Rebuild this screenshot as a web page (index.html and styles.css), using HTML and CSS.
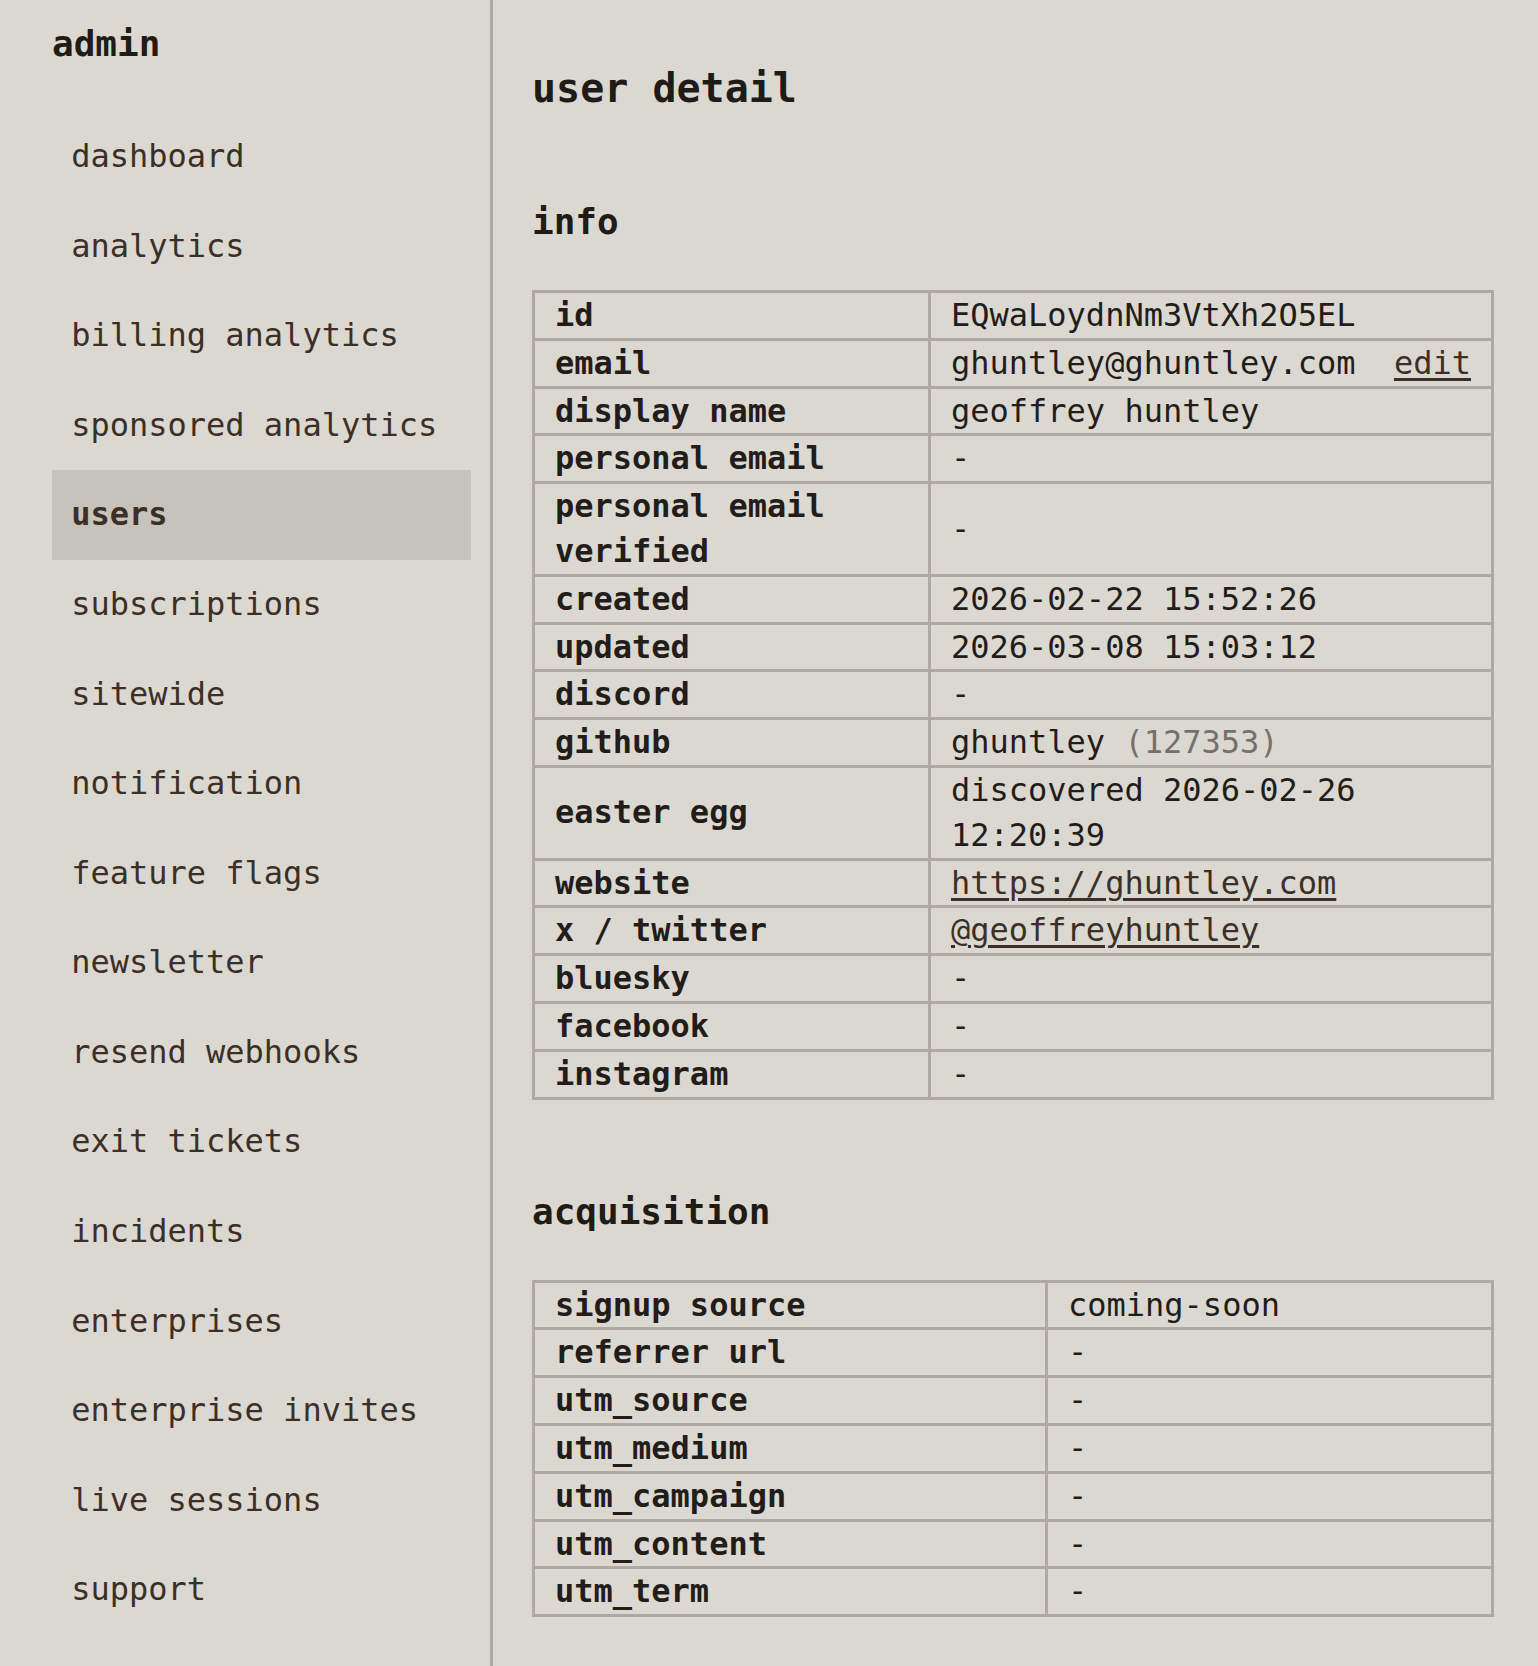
FILE: index.html
```html
<!DOCTYPE html>
<html lang="en">
<head>
<meta charset="utf-8">
<title>user detail</title>
<link rel="stylesheet" href="styles.css">
</head>
<body>
<div class="layout">
  <aside class="sidebar">
    <div class="brand">admin</div>
    <nav class="nav">
      <a class="nav-item" href="#">dashboard</a>
      <a class="nav-item" href="#">analytics</a>
      <a class="nav-item" href="#">billing analytics</a>
      <a class="nav-item" href="#">sponsored analytics</a>
      <a class="nav-item active" href="#">users</a>
      <a class="nav-item" href="#">subscriptions</a>
      <a class="nav-item" href="#">sitewide</a>
      <a class="nav-item" href="#">notification</a>
      <a class="nav-item" href="#">feature flags</a>
      <a class="nav-item" href="#">newsletter</a>
      <a class="nav-item" href="#">resend webhooks</a>
      <a class="nav-item" href="#">exit tickets</a>
      <a class="nav-item" href="#">incidents</a>
      <a class="nav-item" href="#">enterprises</a>
      <a class="nav-item" href="#">enterprise invites</a>
      <a class="nav-item" href="#">live sessions</a>
      <a class="nav-item" href="#">support</a>
      <a class="nav-item" href="#">moderation</a>
    </nav>
  </aside>
  <main class="main">
    <h1 class="page-title">user detail</h1>

    <section class="section">
      <h2 class="section-title">info</h2>
      <table class="kv kv-info">
        <colgroup><col class="col-key"><col></colgroup>
        <tbody>
          <tr><th>id</th><td>EQwaLoydnNm3VtXh2O5EL</td></tr>
          <tr><th>email</th><td><div class="split"><span>ghuntley@ghuntley.com</span><a class="link" href="#">edit</a></div></td></tr>
          <tr><th>display name</th><td>geoffrey huntley</td></tr>
          <tr><th>personal email</th><td>-</td></tr>
          <tr><th>personal email verified</th><td>-</td></tr>
          <tr><th>created</th><td>2026-02-22 15:52:26</td></tr>
          <tr><th>updated</th><td>2026-03-08 15:03:12</td></tr>
          <tr><th>discord</th><td>-</td></tr>
          <tr><th>github</th><td>ghuntley <span class="muted">(127353)</span></td></tr>
          <tr><th>easter egg</th><td>discovered 2026-02-26 12:20:39</td></tr>
          <tr><th>website</th><td><a class="link" href="#">https://ghuntley.com</a></td></tr>
          <tr><th>x / twitter</th><td><a class="link" href="#">@geoffreyhuntley</a></td></tr>
          <tr><th>bluesky</th><td>-</td></tr>
          <tr><th>facebook</th><td>-</td></tr>
          <tr><th>instagram</th><td>-</td></tr>
        </tbody>
      </table>
    </section>

    <section class="section">
      <h2 class="section-title">acquisition</h2>
      <table class="kv kv-acq">
        <colgroup><col class="col-key"><col></colgroup>
        <tbody>
          <tr><th>signup source</th><td>coming-soon</td></tr>
          <tr><th>referrer url</th><td>-</td></tr>
          <tr><th>utm_source</th><td>-</td></tr>
          <tr><th>utm_medium</th><td>-</td></tr>
          <tr><th>utm_campaign</th><td>-</td></tr>
          <tr><th>utm_content</th><td>-</td></tr>
          <tr><th>utm_term</th><td>-</td></tr>
        </tbody>
      </table>
    </section>
  </main>
</div>
</body>
</html>
```

FILE: styles.css
```css
* {
  box-sizing: border-box;
}

html, body {
  margin: 0;
  padding: 0;
  background: #dbd8d2;
}

body {
  font-family: "DejaVu Sans Mono", "Liberation Mono", monospace;
  font-size: 32px;
  color: #221d19;
}

.layout {
  display: flex;
  align-items: stretch;
  min-height: 100vh;
}

.sidebar {
  flex: 0 0 493px;
  width: 493px;
  padding: 22px 19px 40px 52px;
  border-right: 3px solid #aea9a3;
}

.brand {
  font-size: 36px;
  font-weight: 700;
  line-height: 44px;
  color: #1f1b17;
  margin-bottom: 46px;
}

.nav {
  display: flex;
  flex-direction: column;
}

.nav-item {
  display: block;
  padding: 19.2px;
  line-height: 1.6;
  color: #3b2f26;
  text-decoration: none;
}

.nav-item.active {
  background: #c6c2bc;
  font-weight: 700;
}

.main {
  flex: 1 1 auto;
  min-width: 0;
  padding: 64px 44px 40px 39px;
}

.page-title {
  margin: 0;
  font-size: 40px;
  line-height: 48px;
  font-weight: 700;
  color: #1f1b17;
}

.section {
  margin-top: 86px;
}

.section + .section {
  margin-top: 88px;
}

.section-title {
  margin: 0 0 44px 0;
  font-size: 36px;
  line-height: 48px;
  font-weight: 700;
  color: #1f1b17;
}

.kv {
  width: 100%;
  border-collapse: collapse;
  table-layout: fixed;
  border: 3px solid #aea9a3;
}

.kv-info .col-key {
  width: 396px;
}

.kv-acq .col-key {
  width: 513px;
}

.kv th,
.kv td {
  border: 3px solid #aea9a3;
  padding: 0 20px;
  line-height: 44.8px;
  text-align: left;
  vertical-align: middle;
  font-size: 32px;
}

.kv th {
  font-weight: 700;
  color: #221d19;
}

.kv td {
  font-weight: 400;
  color: #221d19;
}

.split {
  display: flex;
  justify-content: space-between;
  align-items: baseline;
}

.link {
  color: #3b2f26;
  text-decoration: underline;
  text-underline-offset: 4px;
}

.muted {
  color: #76706a;
}
```
